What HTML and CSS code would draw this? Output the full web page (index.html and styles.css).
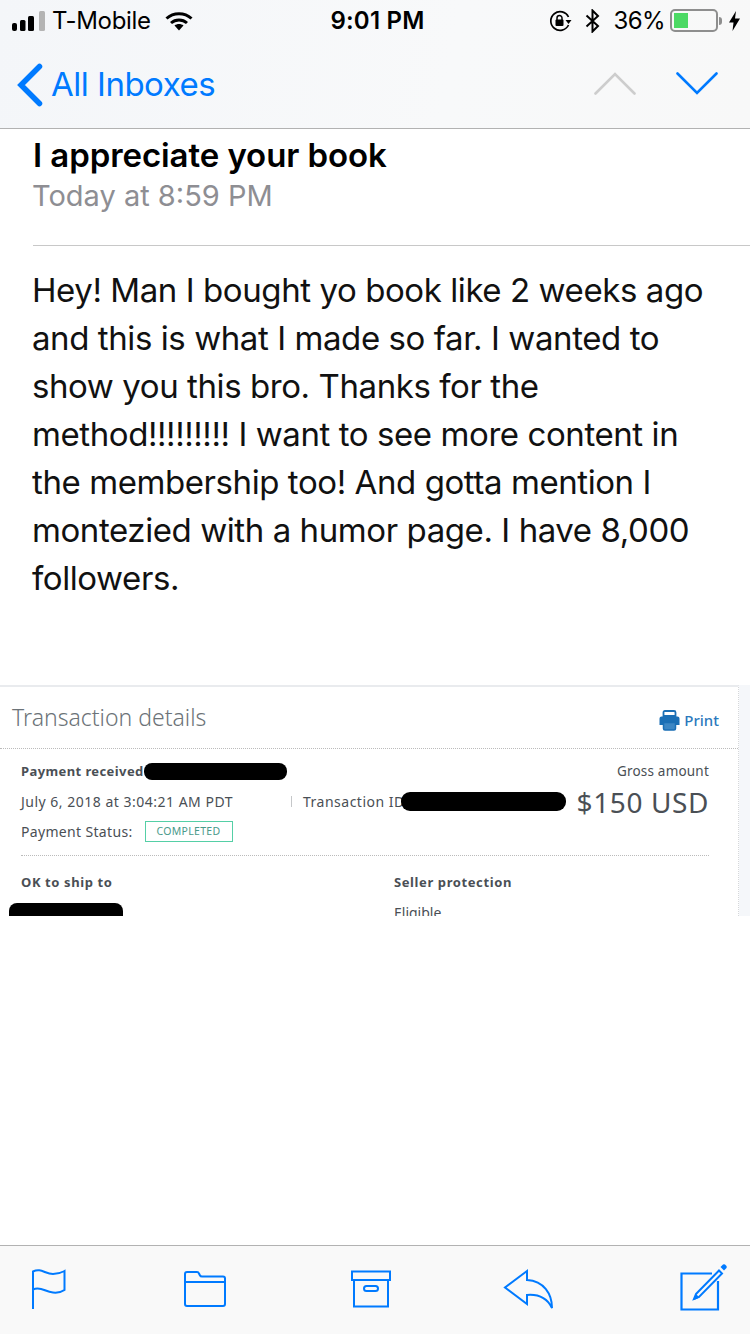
FILE: index.html
```html
<!DOCTYPE html>
<html lang="en">
<head>
<meta charset="utf-8">
<title>I appreciate your book</title>
<link rel="stylesheet" href="styles.css">
</head>
<body>
<div class="screen">
  <header class="top">
    <div class="status">
      <div class="status-left">
        <svg class="signal" width="33" height="22" viewBox="0 0 33 22"><rect x="0" y="13" width="5" height="8" rx="2" fill="#000"/><rect x="8" y="10" width="5.500" height="11" rx="1.500" fill="#000"/><rect x="16" y="6" width="6" height="15" rx="1.500" fill="#000"/><rect x="27" y="1" width="6" height="20" rx="1.500" fill="#b4b4b4"/></svg>
        <span class="carrier">T-Mobile</span>
        <svg class="wifi" width="28" height="20" viewBox="0 0 28 20"><path d="M1.500 7.500C8.500 1 19.500 1 26.500 7.500" fill="none" stroke="#000" stroke-width="3"/><path d="M6 12C10.500 8 17.500 8 22 12" fill="none" stroke="#000" stroke-width="3"/><path d="M9.500 14.500C12 12.500 16 12.500 18.500 14.500L14 19.500Z" fill="#000"/></svg>
      </div>
      <div class="time">9:01 PM</div>
      <div class="status-right">
        <svg class="rot" width="23" height="22" viewBox="0 0 23 22"><path d="M19.500 7A9.300 9.300 0 1 0 19.500 15" fill="none" stroke="#000" stroke-width="1.700"/><path d="M16.500 10L22.500 10L19.500 14Z" fill="#000"/><rect x="6.500" y="9.500" width="8" height="6.500" rx="1" fill="#000"/><path d="M8 10V8a2.500 2.500 0 0 1 5 0v2" fill="none" stroke="#000" stroke-width="1.500"/></svg>
        <svg class="bt" width="15" height="24" viewBox="0 0 15 24"><path d="M1.500 6.500L13 17L7.500 22.500V1.500L13 7L1.500 17.500" fill="none" stroke="#000" stroke-width="2"/></svg>
        <span class="pct">36%</span>
        <div class="battery"><div class="charge" style="width:35%"></div></div>
        <div class="nub"></div>
        <svg class="bolt" width="11" height="20" viewBox="0 0 11 20"><path d="M7 0L0 11.500H4.500L3.500 20L11 7.500H6Z" fill="#000"/></svg>
      </div>
    </div>
    <nav class="nav">
      <a class="back">
        <svg width="26" height="44" viewBox="0 0 26 44"><path d="M22.500 3.500L4 22L22.500 40.500" fill="none" stroke="#007aff" stroke-width="5.500" stroke-linecap="round" stroke-linejoin="miter"/></svg>
        <span>All Inboxes</span>
      </a>
      <div class="arrows">
        <svg width="42" height="23" viewBox="0 0 42 23"><path d="M1.500 21.500L21 2L40.500 21.500" fill="none" stroke="#cdcdcd" stroke-width="2.600" stroke-linecap="round"/></svg>
        <svg width="42" height="23" viewBox="0 0 42 23"><path d="M1.500 1.500L21 21L40.500 1.500" fill="none" stroke="#007aff" stroke-width="2.600" stroke-linecap="round"/></svg>
      </div>
    </nav>
  </header>

  <main class="mail">
    <div class="meta">
      <h1 class="subject">I appreciate your book</h1>
      <div class="date">Today at 8:59 PM</div>
    </div>
    <p class="body-text">Hey! Man I bought yo book like 2 weeks ago and this is what I made so far. I wanted to show you this bro. Thanks for the method!!!!!!!!! I want to see more content in the membership too! And gotta mention I montezied with a humor page. I have 8,000 followers.</p>

    <section class="receipt">
      <div class="card">
        <div class="card-head">
          <span class="card-title">Transaction details</span>
          <span class="print">
            <svg width="21" height="21" viewBox="0 0 21 21"><path d="M4.500 6V2.500Q4.500 1 6 1H15Q16.500 1 16.500 2.500V6Z" fill="none" stroke="#1b6fb5" stroke-width="1.800"/><path d="M2.500 6.500H18.500Q20.500 6.500 20.500 8.500V15H17V12H4V15H.5V8.500Q.5 6.500 2.500 6.500Z" fill="#1b6fb5"/><path d="M4.500 12.500H16.500V18.500Q16.500 20 15 20H6Q4.500 20 4.500 18.500Z" fill="#3d87c4" stroke="#1b6fb5" stroke-width="1.500"/></svg>
            Print
          </span>
        </div>
        <div class="card-body">
          <div class="summary">
            <div class="facts">
              <div class="fact strong">Payment received<i class="blot blot-a"></i></div>
              <div class="fact fact-date">
                <span class="when">July 6, 2018 at 3:04:21 AM PDT</span>
                <span class="sep"></span>
                <span>Transaction ID</span><i class="blot blot-b"></i>
              </div>
              <div class="fact"><span class="status-label">Payment Status:</span><span class="badge">COMPLETED</span></div>
            </div>
            <div class="amount">
              <div class="gross">Gross amount</div>
              <div class="sum">$150 USD</div>
            </div>
          </div>
          <div class="details">
            <div class="col">
              <div class="strong">OK to ship to</div>
              <i class="blot blot-c"></i>
            </div>
            <div class="col">
              <div class="strong">Seller protection</div>
              <div class="eligible">Eligible</div>
            </div>
          </div>
        </div>
      </div>
    </section>
  </main>

  <footer class="toolbar">
    <svg class="tb-flag" width="36" height="42" viewBox="0 0 36 42"><path d="M2 41V3.500C10 -.5 14 6 22 6C27 6 30 5 33.500 3V22C30 24.500 27 25 22 24.500C14 24 10 18 2 21.500" fill="none" stroke="#007aff" stroke-width="2"/></svg>
    <svg class="tb-folder" width="44" height="38" viewBox="0 0 44 38"><path d="M2 12V4Q2 2 4 2H14Q15.500 2 16 3.500L17 5.500Q17.500 6.500 19 6.500H40Q42 6.500 42 8.500V34Q42 36 40 36H4Q2 36 2 34V12H42" fill="none" stroke="#007aff" stroke-width="2"/></svg>
    <svg class="tb-archive" width="40" height="38" viewBox="0 0 40 38"><path d="M1 1.500H39V10H1Z M3 10V36.500H37V10" fill="none" stroke="#007aff" stroke-width="2"/><rect x="13" y="16" width="14" height="5" rx="2.500" fill="none" stroke="#007aff" stroke-width="2"/></svg>
    <svg class="tb-reply" width="50" height="40" viewBox="0 0 50 40"><path d="M24 2L2 18.500L24 35V26C36 25 44 29 49 39C49 25 41 12 24 11Z" fill="none" stroke="#007aff" stroke-width="2"/></svg>
    <svg class="tb-compose" width="47" height="47" viewBox="0 0 47 47"><path d="M32 9.500H1.500V45.500H38V17" fill="none" stroke="#007aff" stroke-width="2.200"/><path d="M16 30L39 6.500L42 9.500L19 33L14 35Z" fill="none" stroke="#007aff" stroke-width="2"/><path d="M40.500 3L43 .5Q44 0 45 .5L46.500 2Q47 3 46.500 4L44 6.500Z" fill="#007aff"/><path d="M14 36L16 30L19.500 33.500Z" fill="#007aff"/></svg>
  </footer>
</div>
</body>
</html>
```

FILE: styles.css
```css
* { box-sizing: border-box; }
html, body { margin: 0; padding: 0; background: #fff; }
body { font-family: Inter, "Liberation Sans", sans-serif; color: #000; }

.screen { width: 750px; height: 1334px; display: flex; flex-direction: column; overflow: hidden; }

.top { height: 129px; flex: none; background: linear-gradient(100deg, #f4f6f9 0%, #f8f9fa 60%, #f8f8f8 100%); border-bottom: 1px solid #b2b2b2; }

.status { height: 41px; display: grid; grid-template-columns: 1fr auto 1fr; align-items: center; padding: 0 10px 0 12px; }
.status-left { display: flex; align-items: center; }
.signal { display: block; }
.carrier { margin-left: 7px; font-size: 24px; letter-spacing: -.3px; }
.wifi { margin-left: 14px; }
.time { font-size: 24px; font-weight: 600; letter-spacing: .2px; margin-left: 3px; }
.status-right { display: flex; align-items: center; justify-content: flex-end; }
.bt { margin-left: 13px; }
.pct { margin-left: 14px; font-size: 24px; letter-spacing: -.6px; }
.battery { margin-left: 5px; width: 48px; height: 23px; border: 2px solid #8e8e8e; border-radius: 5px; padding: 2px; }
.charge { height: 100%; background: #4cd964; }
.nub { width: 3px; height: 8px; background: #8e8e8e; border-radius: 0 3px 3px 0; margin-left: 1px; }
.bolt { margin-left: 7px; }

.nav { height: 87px; display: flex; align-items: center; justify-content: space-between; padding: 0 32px 0 17px; }
.back { display: flex; align-items: center; color: #007aff; font-size: 33px; letter-spacing: -.5px; }
.back span { margin: -2px 0 0 8px; }
.back svg { display: block; }
.arrows { display: flex; gap: 40px; margin-top: -3px; }
.arrows svg { display: block; }

.mail { flex: 1; min-height: 0; overflow: hidden; }
.meta { margin-left: 33px; height: 117px; border-bottom: 1px solid #c8c8c8; padding-top: 6px; }
.subject { margin: 0; font-size: 33px; line-height: 40px; font-weight: 600; letter-spacing: -.08px; }
.date { margin: 1px 0 0 -1px; font-size: 29px; line-height: 40px; color: #8e8e93; }
.body-text { margin: 20px 20px 0 32px; font-size: 33px; line-height: 48px; letter-spacing: -.42px; color: #111; }

.receipt { margin-top: 83px; height: 231px; overflow: hidden; background: #f5f7fa; font-family: "Noto Sans", "Open Sans", sans-serif; color: #4a4f55; }
.card { width: 739px; height: 231px; background: #fff; border-top: 2px solid #e9ebee; border-right: 1px dotted #d5d7da; overflow: hidden; }
.card-head { height: 62px; border-bottom: 1px dotted #bbb; display: flex; align-items: center; justify-content: space-between; padding: 0 19px 2px 12px; }
.card-title { font-size: 23px; font-weight: 300; color: #6c7378; }
.print { display: flex; align-items: center; gap: 4px; font-size: 15px; font-weight: 500; color: #2b79bd; margin-top: 6px; }
.print svg { display: block; margin-top: 2px; }
.card-body { padding: 0 29px 0 21px; }
.summary { height: 107px; border-bottom: 1px dotted #bbb; display: flex; justify-content: space-between; }
.facts { padding-top: 7px; }
.fact { height: 30px; display: flex; align-items: center; font-size: 14px; letter-spacing: .5px; white-space: nowrap; }
.strong { font-weight: 700; font-size: 13px; letter-spacing: .6px; color: #4a4f55; }
.fact.strong { font-size: 13px; letter-spacing: .4px; }
.when { width: 270px; }
.sep { width: 1px; height: 11px; background: #c5c7c9; margin-right: 11px; }
.status-label { letter-spacing: .33px; }
.badge { margin-left: 12px; height: 21px; width: 88px; border: 1px solid #55cfa6; color: #4a9a8a; font-size: 10.500px; display: flex; align-items: center; justify-content: center; letter-spacing: .3px; }
.blot { display: block; background: #000; border-radius: 8px; flex: none; }
.blot-a { width: 143px; height: 17px; }
.blot-b { width: 165px; height: 19px; margin-left: -4px; border-radius: 9px; }
.blot-c { width: 114px; height: 30px; margin: 12px 0 0 -12px; }
.amount { padding-top: 13px; text-align: right; }
.gross { font-size: 13.500px; line-height: 18px; letter-spacing: .2px; }
.sum { font-size: 28px; line-height: 34px; margin-top: 5px; letter-spacing: .6px; }
.details { display: grid; grid-template-columns: 373px 1fr; padding-top: 17px; }
.eligible { font-size: 14px; margin-top: 12px; }
.col .strong { line-height: 18px; }

.toolbar { height: 89px; flex: none; background: #f9f9f9; border-top: 1px solid #b2b2b2; display: flex; padding: 0 0 2px 31px; align-items: center; }
.toolbar svg { display: block; flex: none; }
.tb-folder { margin-left: 116px; }
.tb-archive { margin-left: 124px; }
.tb-reply { margin-left: 112px; }
.tb-compose { margin-left: 127px; margin-top: -4px; }
```
